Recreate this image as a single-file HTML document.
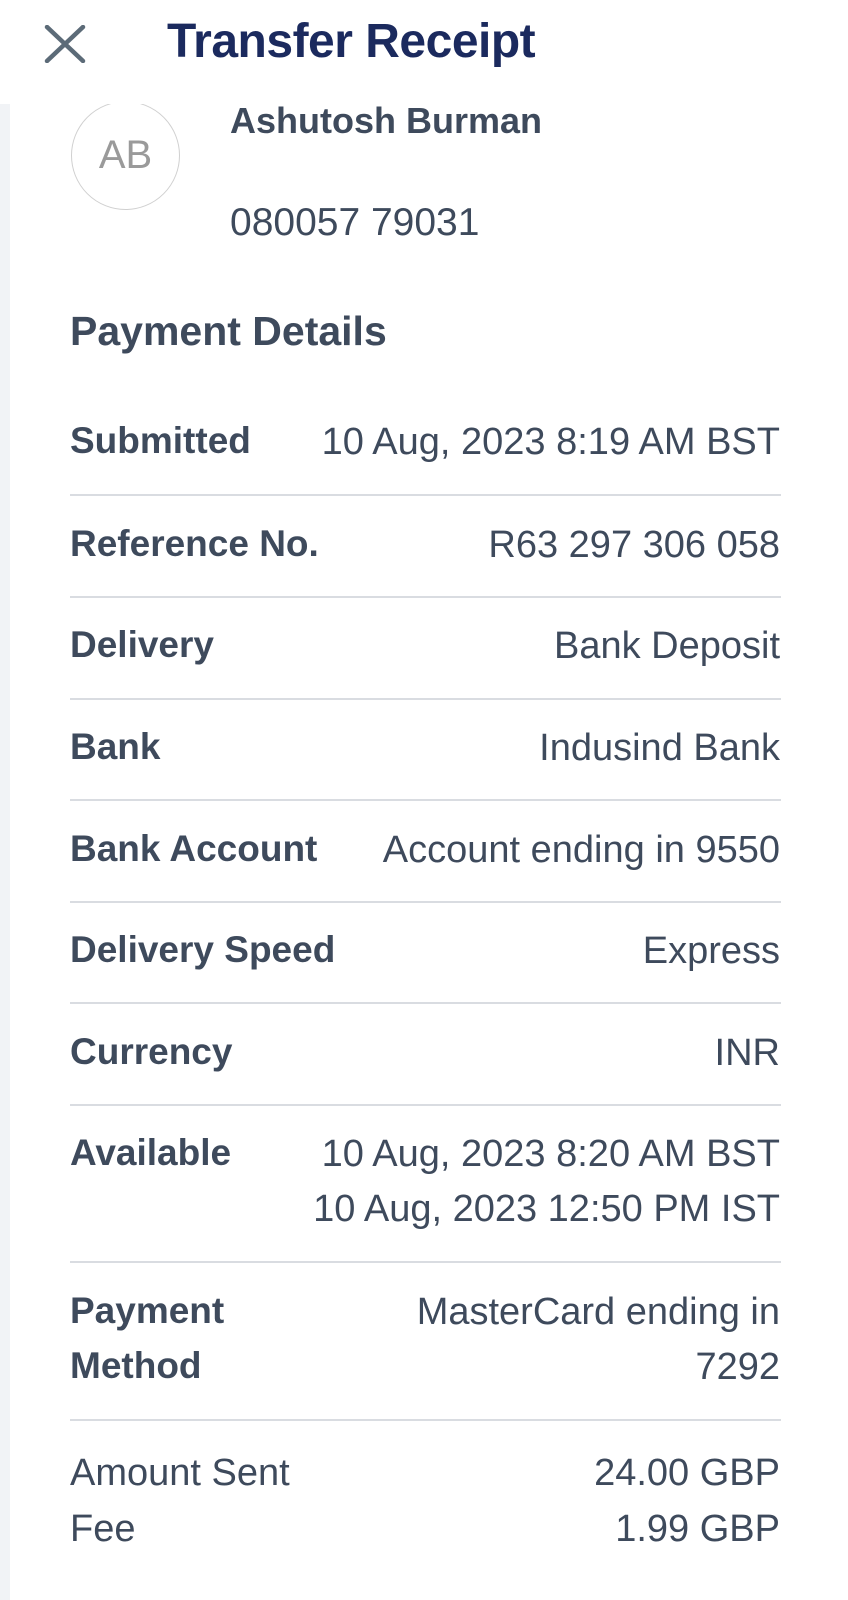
<!DOCTYPE html>
<html><head><meta charset="utf-8"><style>
*{margin:0;padding:0;box-sizing:border-box}
body{width:848px;height:1600px;background:#fff;font-family:"Liberation Sans",Arial,sans-serif;color:#3e4a5c;position:relative;overflow:hidden}
.strip{position:absolute;left:0;top:104px;width:10px;height:1496px;background:#f1f3f6}
.hdr{position:absolute;left:0;top:0;width:848px;height:104px;background:#fff;z-index:2}
.title{position:absolute;left:167px;top:14px;font-size:48px;font-weight:bold;color:#1b2a5e;letter-spacing:-0.5px}
.circle{position:absolute;left:71px;top:101px;width:109px;height:109px;border:1.5px solid #d0d0d0;border-radius:50%;display:flex;align-items:center;justify-content:center;font-size:40px;color:#9a9a9a}
.t{position:absolute;white-space:nowrap}
.lbl{font-weight:bold;font-size:37px;left:70px}
.val{font-size:38px;right:68px;text-align:right}
.line{position:absolute;left:70px;width:711px;height:1.5px;background:#d9dce1}
</style></head><body>
<div class="strip"></div>
<div class="circle">AB</div>
<div class="hdr">
<svg style="position:absolute;left:44px;top:25px" width="42" height="38" viewBox="0 0 42 38"><path d="M3 2L39 36M39 2L3 36" stroke="#5c6b78" stroke-width="4.5" stroke-linecap="round"/></svg>
<div class="title">Transfer Receipt</div>
</div>
<div class="t" style="left:230px;top:100px;font-size:36px;font-weight:bold">Ashutosh Burman</div>
<div class="t" style="left:230px;top:201px;font-size:39px">080057 79031</div>
<div class="t" style="left:70px;top:308px;font-size:41px;font-weight:bold">Payment Details</div>

<div class="t lbl" style="top:420px">Submitted</div><div class="t val" style="top:421px">10 Aug, 2023 8:19 AM BST</div>
<div class="line" style="top:494px"></div>
<div class="t lbl" style="top:523px">Reference No.</div><div class="t val" style="top:524px">R63 297 306 058</div>
<div class="line" style="top:596px"></div>
<div class="t lbl" style="top:624px">Delivery</div><div class="t val" style="top:625px">Bank Deposit</div>
<div class="line" style="top:698px"></div>
<div class="t lbl" style="top:726px">Bank</div><div class="t val" style="top:727px">Indusind Bank</div>
<div class="line" style="top:799px"></div>
<div class="t lbl" style="top:828px">Bank Account</div><div class="t val" style="top:829px">Account ending in 9550</div>
<div class="line" style="top:901px"></div>
<div class="t lbl" style="top:929px">Delivery Speed</div><div class="t val" style="top:930px">Express</div>
<div class="line" style="top:1002px"></div>
<div class="t lbl" style="top:1031px">Currency</div><div class="t val" style="top:1032px">INR</div>
<div class="line" style="top:1104px"></div>
<div class="t lbl" style="top:1132px">Available</div><div class="t val" style="top:1133px">10 Aug, 2023 8:20 AM BST</div>
<div class="t val" style="top:1188px">10 Aug, 2023 12:50 PM IST</div>
<div class="line" style="top:1261px"></div>
<div class="t lbl" style="top:1290px">Payment</div><div class="t val" style="top:1291px">MasterCard ending in</div>
<div class="t lbl" style="top:1345px">Method</div><div class="t val" style="top:1346px">7292</div>
<div class="line" style="top:1419px"></div>
<div class="t" style="left:70px;top:1452px;font-size:38px">Amount Sent</div><div class="t val" style="top:1452px">24.00 GBP</div>
<div class="t" style="left:70px;top:1508px;font-size:38px">Fee</div><div class="t val" style="top:1508px">1.99 GBP</div>
</body></html>
